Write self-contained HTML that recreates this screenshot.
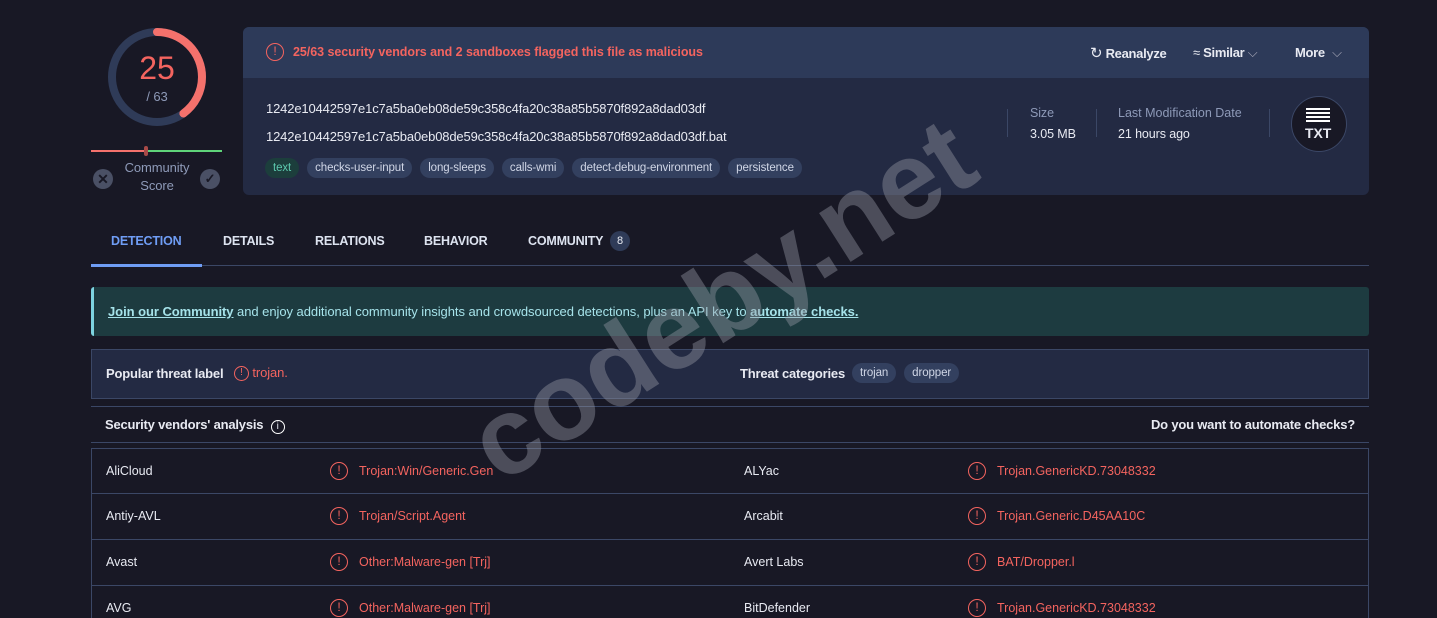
<!DOCTYPE html>
<html><head><meta charset="utf-8"><style>
*{margin:0;padding:0;box-sizing:border-box}
html,body{width:1437px;height:618px;overflow:hidden}
body{background:#181825;font-family:"Liberation Sans",sans-serif;color:#e8eaf2;position:relative;font-size:12.5px;letter-spacing:-0.1px}
.a{position:absolute;white-space:nowrap}
.red{color:#f4645f}
.pills{position:absolute;left:265px;top:158px;display:flex;gap:8px}
.pill{height:20px;border-radius:10px;background:#33405f;color:#d0d6e6;font-size:11.5px;line-height:20px;padding:0 8px;white-space:nowrap}
.hl{position:absolute;left:91px;width:1278px;height:1px;background:#3b4766}
.row{position:absolute;left:91px;width:1278px;height:46px;border-left:1px solid #3b4766;border-right:1px solid #3b4766;border-bottom:1px solid #3b4766}
.row span{position:absolute;top:15px;font-size:12.5px;white-space:nowrap;letter-spacing:0}
.ic{display:inline-block;width:18px;height:18px;border:1.5px solid #f4645f;border-radius:50%;color:#f4645f;font-size:12px;line-height:15px;text-align:center;font-style:normal;letter-spacing:0}
.tab{position:absolute;top:234px;font-weight:bold;color:#dde3f0;font-size:12.5px;letter-spacing:-0.2px}
</style></head><body>
<svg class="a" style="left:105px;top:25px" width="104" height="104" viewBox="0 0 104 104">
<circle cx="52" cy="52" r="45" fill="none" stroke="#2f3b58" stroke-width="8"/>
<circle cx="52" cy="52" r="45" fill="none" stroke="#f4716c" stroke-width="8" stroke-dasharray="113 400" transform="rotate(-90 52 52)" stroke-linecap="round"/>
</svg>
<div class="a" style="left:105px;top:50px;width:104px;text-align:center;font-size:32px;color:#f4645f">25</div>
<div class="a" style="left:105px;top:89px;width:104px;text-align:center;font-size:13px;color:#8e9ab8">/ 63</div>
<div class="a" style="left:91px;top:150px;width:55px;height:2px;background:#f4716c"></div>
<div class="a" style="left:146px;top:150px;width:76px;height:2px;background:#5fd47a"></div>
<div class="a" style="left:144px;top:146px;width:4px;height:10px;background:#a84a48;border-radius:2px"></div>
<div class="a" style="left:93px;top:169px;width:20px;height:20px;border-radius:50%;background:#4a5065;color:#181825;text-align:center;line-height:20px;font-size:14px;font-weight:bold">✕</div>
<div class="a" style="left:200px;top:169px;width:20px;height:20px;border-radius:50%;background:#4a5065;color:#181825;text-align:center;line-height:20px;font-size:13px;font-weight:bold">✓</div>
<div class="a" style="left:115px;top:159px;width:84px;text-align:center;color:#8e9ab8;font-size:13px;line-height:18px">Community<br>Score</div>

<div class="a" style="left:243px;top:27px;width:1126px;height:168px;background:#232a43;border-radius:6px;overflow:hidden">
<div style="height:51px;background:#2d3a59"></div></div>
<div class="a" style="left:266px;top:43px"><span class="ic">!</span></div>
<div class="a red" style="left:293px;top:45px;font-weight:bold;font-size:12.5px;letter-spacing:-0.05px">25/63 security vendors and 2 sandboxes flagged this file as malicious</div>
<div class="a" style="left:1090px;top:44px;font-size:13px;font-weight:bold;letter-spacing:-0.3px"><span style="font-weight:normal;font-size:15px">↻</span> Reanalyze</div>
<div class="a" style="left:1193px;top:45px;font-size:13px;font-weight:bold;letter-spacing:-0.3px"><span style="font-weight:normal">≈</span> Similar <span style="font-weight:normal;color:#aab">⌵</span></div>
<div class="a" style="left:1295px;top:45px;font-size:13px;font-weight:bold;letter-spacing:-0.3px">More <span style="font-weight:normal;color:#aab;margin-left:4px">⌵</span></div>
<div class="a" style="left:266px;top:101px;font-size:13px;letter-spacing:-0.15px">1242e10442597e1c7a5ba0eb08de59c358c4fa20c38a85b5870f892a8dad03df</div>
<div class="a" style="left:266px;top:129px;font-size:13px;letter-spacing:-0.15px">1242e10442597e1c7a5ba0eb08de59c358c4fa20c38a85b5870f892a8dad03df.bat</div>
<div class="pills"><div class="pill" style="background:#1c3e3c;color:#5cc9ae">text</div><div class="pill">checks-user-input</div><div class="pill">long-sleeps</div><div class="pill">calls-wmi</div><div class="pill">detect-debug-environment</div><div class="pill">persistence</div></div>
<div class="a" style="left:1007px;top:109px;width:1px;height:28px;background:#3b4766"></div>
<div class="a" style="left:1096px;top:109px;width:1px;height:28px;background:#3b4766"></div>
<div class="a" style="left:1269px;top:109px;width:1px;height:28px;background:#3b4766"></div>
<div class="a" style="left:1030px;top:106px;color:#8e9ab8;font-size:12.5px">Size</div>
<div class="a" style="left:1030px;top:127px;font-size:12.5px">3.05 MB</div>
<div class="a" style="left:1118px;top:106px;color:#8e9ab8;font-size:12.5px;letter-spacing:0">Last Modification Date</div>
<div class="a" style="left:1118px;top:127px;font-size:12.5px">21 hours ago</div>
<div class="a" style="left:1291px;top:96px;width:56px;height:56px;border-radius:50%;background:#181825;border:1px solid #3b4766"></div>
<div class="a" style="left:1306px;top:108px;width:24px;height:2px;background:#fff;box-shadow:0 4px #fff,0 8px #fff,0 12px #fff;"></div>
<div class="a" style="left:1305px;top:125px;font-weight:bold;font-size:14px">TXT</div>

<div class="tab" style="left:111px;color:#6f9df5">DETECTION</div>
<div class="tab" style="left:223px">DETAILS</div>
<div class="tab" style="left:315px">RELATIONS</div>
<div class="tab" style="left:424px">BEHAVIOR</div>
<div class="tab" style="left:528px">COMMUNITY</div>
<div class="a" style="left:610px;top:231px;width:20px;height:20px;border-radius:50%;background:#2f3b58;text-align:center;line-height:20px;font-size:11px">8</div>
<div class="hl" style="top:265px"></div>
<div class="a" style="left:91px;top:264px;width:111px;height:3px;background:#6f9df5"></div>

<div class="a" style="left:91px;top:287px;width:1278px;height:49px;background:#1d3b40;border-left:3px solid #7dd3e0;border-radius:3px"></div>
<div class="a" style="left:108px;top:304px;color:#a6e3ea;font-size:13px;letter-spacing:-0.05px"><b style="text-decoration:underline">Join our Community</b> and enjoy additional community insights and crowdsourced detections, plus an API key to <b style="text-decoration:underline">automate checks.</b></div>

<div class="a" style="left:91px;top:349px;width:1278px;height:50px;background:#232a43;border:1px solid #3b4766"></div>
<div class="a" style="left:106px;top:366px;font-weight:bold;font-size:13px;letter-spacing:-0.2px">Popular threat label</div>
<div class="a" style="left:234px;top:365px"><span class="ic" style="width:15px;height:15px;font-size:10px;line-height:12px;vertical-align:middle">!</span> <span class="red" style="font-size:13px">trojan.</span></div>
<div class="a" style="left:740px;top:366px;font-weight:bold;font-size:13px;letter-spacing:-0.2px">Threat categories</div>
<div class="pills" style="left:852px;top:363px"><div class="pill">trojan</div><div class="pill">dropper</div></div>

<div class="hl" style="top:406px"></div>
<div class="a" style="left:105px;top:417px;font-weight:bold;font-size:13px;letter-spacing:-0.2px">Security vendors' analysis <span style="display:inline-block;width:14px;height:14px;border:1.3px solid #fff;border-radius:50%;font-size:10px;line-height:11px;text-align:center;font-weight:normal;margin-left:4px;letter-spacing:0">i</span></div>
<div class="a" style="right:82px;top:417px;font-weight:bold;font-size:13px;letter-spacing:-0.2px">Do you want to automate checks?</div>
<div class="hl" style="top:442px"></div>

<div class="row" style="top:448px;border-top:1px solid #3b4766"><span style="left:14px">AliCloud</span><span style="left:238px;top:13px"><i class="ic">!</i></span><span class="red" style="left:267px">Trojan:Win/Generic.Gen</span><span style="left:652px">ALYac</span><span style="left:876px;top:13px"><i class="ic">!</i></span><span class="red" style="left:905px">Trojan.GenericKD.73048332</span></div>
<div class="row" style="top:494px"><span style="left:14px">Antiy-AVL</span><span style="left:238px;top:13px"><i class="ic">!</i></span><span class="red" style="left:267px">Trojan/Script.Agent</span><span style="left:652px">Arcabit</span><span style="left:876px;top:13px"><i class="ic">!</i></span><span class="red" style="left:905px">Trojan.Generic.D45AA10C</span></div>
<div class="row" style="top:540px"><span style="left:14px">Avast</span><span style="left:238px;top:13px"><i class="ic">!</i></span><span class="red" style="left:267px">Other:Malware-gen [Trj]</span><span style="left:652px">Avert Labs</span><span style="left:876px;top:13px"><i class="ic">!</i></span><span class="red" style="left:905px">BAT/Dropper.l</span></div>
<div class="row" style="top:586px;height:32px;border-bottom:none"><span style="left:14px">AVG</span><span style="left:238px;top:13px"><i class="ic">!</i></span><span class="red" style="left:267px">Other:Malware-gen [Trj]</span><span style="left:652px">BitDefender</span><span style="left:876px;top:13px"><i class="ic">!</i></span><span class="red" style="left:905px">Trojan.GenericKD.73048332</span></div>

<div class="a" style="left:722px;top:300px;transform:translate(-50%,-50%) rotate(-32.5deg);font-weight:bold;font-size:110px;color:rgba(150,152,165,0.42);line-height:1;letter-spacing:0">codeby.net</div>
</body></html>
